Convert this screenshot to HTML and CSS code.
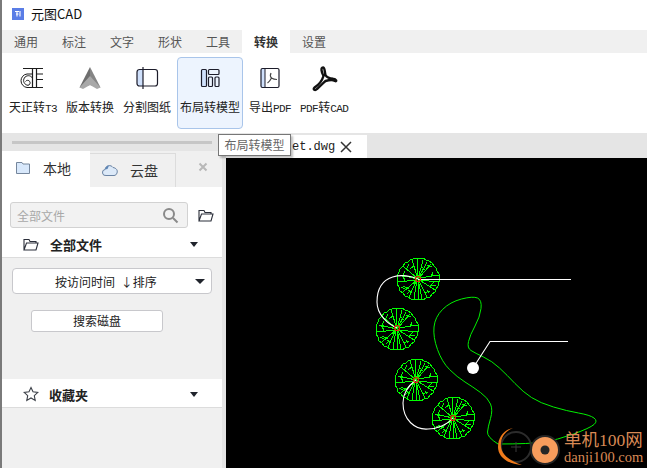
FILE: index.html
```html
<!DOCTYPE html>
<html lang="zh">
<head>
<meta charset="utf-8">
<title>元图CAD</title>
<link rel="stylesheet" href="styles.css">
</head>
<body>
<div class="app">
  <header class="titlebar">
    <svg class="logo" viewBox="0 0 12 12"><rect width="12" height="12" fill="#5a7de6"/><path d="M3 3.500H7M4 6H6.500M8 3V8.500M5 3.500V8.500" stroke="#fff" stroke-width="1.100" fill="none"/></svg>
    <span class="apptitle">元图CAD</span>
  </header>
  <nav class="menutabs">
    <span class="menutab">通用</span><span class="menutab">标注</span><span class="menutab">文字</span><span class="menutab">形状</span><span class="menutab">工具</span><span class="menutab active">转换</span><span class="menutab">设置</span>
  </nav>
  <section class="ribbon">
    <div class="rbtn">
      <svg class="ricon" viewBox="0 0 28 28"><path d="M4 4.500H24M13.500 4.500V23.500M17.500 4.500V23.500M17.500 10H24M17.500 15.500H24M8 23.500H24M13.500 10H8" fill="none" stroke="#1c1c1c" stroke-width="1.200"/><path d="M8 10A6.800 6.800 0 0 0 8 23.500M13.500 14A4.800 4.800 0 1 0 9 21.300A2.500 2.500 0 1 0 6.500 17.500" fill="none" stroke="#1c1c1c" stroke-width="1"/></svg>
      <span class="rlabel">天正转<span class="latin">T3</span></span>
    </div>
    <div class="rbtn">
      <svg class="ricon" viewBox="0 0 28 28"><path d="M14 3L3.500 23.500L14 21Z" fill="#6e6e6e"/><path d="M14 3L24.500 23.500L14 21Z" fill="#858585"/><path d="M14 12L3.500 23.500L7 25L14 21L21 25L24.500 23.500Z" fill="#a8a8a8"/></svg>
      <span class="rlabel">版本转换</span>
    </div>
    <div class="rbtn">
      <svg class="ricon" viewBox="0 0 28 28"><path d="M10 5.500H6.500A2.500 2.500 0 0 0 4 8V19.500A2.500 2.500 0 0 0 6.500 22H10Z" fill="#cfe0fb"/><rect x="4" y="5.500" width="20.500" height="16.500" rx="2.500" fill="none" stroke="#1c1c2a" stroke-width="1.200"/><path d="M10 3V25" stroke="#1c1c2a" stroke-width="1.200"/></svg>
      <span class="rlabel">分割图纸</span>
    </div>
    <div class="rbtn selected">
      <svg class="ricon" viewBox="0 0 28 28"><rect x="5.500" y="5.500" width="5" height="17" rx="1" fill="#cfe0fb" stroke="#1c1c2a" stroke-width="1.200"/><rect x="12.500" y="5.500" width="10.500" height="5" rx="1" fill="none" stroke="#1c1c2a" stroke-width="1.200"/><rect x="12.500" y="13" width="4" height="9.500" rx="1" fill="none" stroke="#1c1c2a" stroke-width="1.200"/><rect x="19" y="13" width="4" height="9.500" rx="1" fill="none" stroke="#1c1c2a" stroke-width="1.200"/></svg>
      <span class="rlabel">布局转模型</span>
    </div>
    <div class="rbtn">
      <svg class="ricon" viewBox="0 0 28 28"><path d="M5 4.500H9V23.500H5Z" fill="#cfe0fb"/><rect x="5" y="4.500" width="18" height="19" rx="1.500" fill="none" stroke="#1c1c2a" stroke-width="1.200"/><path d="M9 4.500V23.500" stroke="#1c1c2a" stroke-width="1"/><path d="M15 9C14 11 14.500 13 15.500 14C14.500 16 13 18 11.500 19M15.500 14C17 15 19 15.500 21 15.500" fill="none" stroke="#444" stroke-width="1.200"/></svg>
      <span class="rlabel">导出<span class="latin">PDF</span></span>
    </div>
    <div class="rbtn">
      <svg class="ricon" viewBox="0 0 28 28"><path d="M13 3.500C10.500 3.500 11.500 8.500 13.500 12C12 17 8.500 21 4.500 23.500C2.500 25.500 5 27 7 25C10 22.500 12.500 19.500 15.500 17C19 16 23 15.500 25 17C27 18 26.500 15 23 14.800C20 14.500 17 14 15.500 11C14.500 8 15 3.500 13 3.500Z" fill="none" stroke="#111" stroke-width="2.400" stroke-linejoin="round"/></svg>
      <span class="rlabel"><span class="latin">PDF</span>转<span class="latin">CAD</span></span>
    </div>
  </section>
  <main class="workspace">
    <aside class="sidebar">
      <div class="band"><div class="strip"></div></div>
      <div class="sidetabs">
        <div class="sidetab current">
          <svg class="sideicon" viewBox="0 0 16 14"><path d="M1.500 1.500H7L8 3H14.500V12.500H1.500Z" fill="#d8e8fb" stroke="#75869c"/></svg>
          <span>本地</span>
        </div>
        <div class="sidetab">
          <svg class="sideicon" viewBox="0 0 16 14"><path d="M4 12.500A3 3 0 0 1 3 6.500C4 2 9 1.500 11 4.500C14 5 16 7 15 10C14.500 11.500 13.500 12.500 12 12.500Z" fill="#dce9f8" stroke="#6b84a4"/><path d="M3 6.500C3.500 4 5 2.500 7 2.500L5.500 6Z" fill="#5f86b5"/></svg>
          <span>云盘</span>
        </div>
        <svg class="sideclose" viewBox="0 0 10 10"><path d="M1.500 1.500L8.500 8.500M8.500 1.500L1.500 8.500" stroke="#b8b8b8" stroke-width="2"/></svg>
      </div>
      <div class="filesection">
        <div class="searchrow">
          <div class="searchbox">
            <span class="placeholder">全部文件</span>
            <svg class="searchicon" viewBox="0 0 17 17"><circle cx="7" cy="7" r="5" fill="none" stroke="#8a8a8a" stroke-width="2"/><path d="M11 11L15.500 15.500" stroke="#8a8a8a" stroke-width="2"/></svg>
          </div>
          <svg class="foldericon" viewBox="0 0 16 13"><path d="M1 12V1.500H6L7 3.500H13V5M1 12H13L15 5H3.500L1 12Z" fill="none" stroke="#2b2f3a" stroke-width="1.100"/></svg>
        </div>
        <div class="grouprow">
          <svg class="foldericon" viewBox="0 0 16 13"><path d="M1 12V1.500H6L7 3.500H13V5M1 12H13L15 5H3.500L1 12Z" fill="none" stroke="#2b2f3a" stroke-width="1.100"/></svg>
          <span class="grouplabel">全部文件</span>
          <span class="caret"></span>
        </div>
      </div>
      <div class="panel">
        <div class="sortselect">
          <span>按访问时间 ↓排序</span>
          <span class="caret large"></span>
        </div>
        <div class="diskbutton">搜索磁盘</div>
      </div>
      <div class="grouprow favorites">
        <svg class="foldericon" viewBox="0 0 16 16"><path d="M8 1.500L10 5.800L14.800 6.400L11.300 9.600L12.200 14.400L8 12L3.800 14.400L4.700 9.600L1.200 6.400L6 5.800Z" fill="none" stroke="#3c4048" stroke-width="1.100"/></svg>
        <span class="grouplabel">收藏夹</span>
        <span class="caret"></span>
      </div>
      <div class="panelrest"></div>
    </aside>
    <section class="document">
      <div class="doctabs">
        <div class="doctab">
          <span class="docname">et.dwg</span>
          <svg class="docclose" viewBox="0 0 12 12"><path d="M1 1L11 11M11 1L1 11" stroke="#333" stroke-width="1.500"/></svg>
        </div>
      </div>
      <div class="canvas">
        <svg class="drawing" viewBox="226 158 421 310">
          <defs>
            <g id="tree" class="treeshape">
              <path d="M-5 -20L-2 -21L2 -20L5 -21L8 -19L11 -18L14 -16L16 -13L18 -11L19 -8L21 -5L21 3L20 7L18 10L17 13L14 15L12 18L8 19L5 21L1 20L-3 21L-7 20L-10 18L-13 17L-15 14L-18 12L-19 8L-21 5L-20 1L-21 -3L-19 -7L-18 -10L-15 -13L-13 -16L-10 -17L-7 -20Z"/>
              <path d="M0 0L-6 -19M-1 -1L-1 -20M0 0L5 -19M0 0L9 -17M0 0L13 -15M1 -1L21 -4M1 1L21 3M0 0L-18 -4M0 0L-15 -13M0 0L17 11M0 0L9 18M0 0L4 20M0 0L0 21M-1 0L-4 20M-1 0L-9 18M-1 1L-15 13M-1 1L-20 3"/>
              <path d="M-4 -13L-8 -10M4 -12L8 -8M-13 -8L-16 -2M13 -2L15 -7M-9 10L-15 7M-13 2L-15 -3M11 8L16 3M-6 13L-10 11M6 14L12 12M-9 -15L-11 -11M9 -14L14 -12M18 7L13 6M-17 8L-13 10M11 14L9 11M-11 15L-8 12"/>
            </g>
          </defs>
          <use href="#tree" x="418" y="279"/>
          <use href="#tree" x="397" y="329"/>
          <use href="#tree" x="416" y="380"/>
          <use href="#tree" x="453" y="418"/>
          <path class="greenline" d="M498 444Q487 437 487.500 432Q488 427 490.500 418.500Q493 410 490.500 404Q488 398 480.500 392.500Q473 387 465 382Q457 377 449.500 369.500Q442 362 437.500 349.500Q433 337 434 327Q435 317 442.500 309.500Q450 302 461.500 299Q473 296 477.500 298Q482 300 481 308.500Q480 317 475 326Q470 335 468.500 341.500Q467 348 471 350.500Q475 353 483.500 357Q492 361 499.500 368Q507 375 515 383.500Q523 392 531.500 397.500Q540 403 553.500 407Q567 411 578.500 413Q590 415 594 418Q598 421 594 424.500Q590 428 573.500 434Q557 440 543.500 442Q530 444 498 444Z"/>
          <path class="whiteline" d="M418 279.500H571M418 279C405 273 377 272 377 302C377 315 388 324 397 328M416 380C405 388 403 397 403 403C403 420 415 430 428 429C438 429 448 424 453 418M473 368L490 341.500H568"/>
          <circle class="whitedot" cx="473" cy="368" r="6"/>
          <circle class="redmark" cx="418" cy="279" r="2.500"/>
          <circle class="redmark" cx="397" cy="328" r="2.500"/>
          <circle class="redmark" cx="416" cy="380" r="2.500"/>
          <circle class="redmark" cx="453" cy="418" r="2.500"/>
          <circle class="markring" cx="516" cy="447" r="15"/>
          <path class="markarc" d="M513 428C503 430 498 438 498 447C498 456 506 464 522 465C510 461 502 455 501 447C500 438 505 431 513 428Z"/>
          <path class="markcross" d="M511 447H521M516 442V452"/>
          <circle class="markdisc" cx="545" cy="450" r="14"/>
          <circle class="markhole" cx="545" cy="450" r="4.500"/>
          <text class="marktitle" x="564" y="446">单机100网</text>
          <text class="markurl" x="564" y="462">danji100.com</text>
        </svg>
      </div>
    </section>
  </main>
  <div class="tooltip">布局转模型</div>
</div>
</body>
</html>
```
FILE: styles.css
```css
* { box-sizing: border-box; }
html, body { margin: 0; padding: 0; }
body {
  font-family: "Noto Sans CJK SC", "Liberation Sans", sans-serif;
  font-size: 12px;
  color: #222;
  background: #fff;
  overflow: hidden;
}
.app {
  position: relative;
  width: 647px;
  height: 468px;
  display: flex;
  flex-direction: column;
  border-left: 2px solid #7a7a7a;
  overflow: hidden;
}
.titlebar {
  height: 30px;
  flex: none;
  display: flex;
  align-items: center;
  gap: 7px;
  padding: 0 0 3px 10px;
  background: #fff;
}
.logo { width: 12px; height: 12px; flex: none; }
.apptitle { font-size: 13px; color: #111; line-height: 1; }
.menutabs {
  height: 23px;
  flex: none;
  display: flex;
  background: #f0f0f0;
}
.menutab {
  width: 48px;
  text-align: center;
  line-height: 23px;
  color: #555;
}
.menutab.active { background: #fff; font-weight: 700; color: #333; }
.ribbon {
  height: 80px;
  flex: none;
  display: flex;
  gap: 3px;
  padding: 4px 0 4px 4px;
  background: #fff;
}
.rbtn {
  height: 72px;
  padding: 6px 2px 0;
  border: 1px solid transparent;
  border-radius: 4px;
  display: flex;
  flex-direction: column;
  align-items: center;
  gap: 5px;
  white-space: nowrap;
}
.rbtn.selected { background: #edf4fe; border-color: #a9c5ea; }
.ricon { width: 28px; height: 28px; flex: none; }
.rlabel { line-height: 20px; color: #222; }
.latin { font-family: "Liberation Mono", monospace; font-size: 11px; letter-spacing: -0.6px; }
.workspace { flex: 1; display: flex; min-height: 0; }
.sidebar {
  width: 220px;
  flex: none;
  display: flex;
  flex-direction: column;
  background: #f0f0f0;
}
.band { height: 18px; flex: none; padding: 8px 10px 0; background: #e5e5e5; }
.strip { height: 3px; background: #c6c6c6; }
.sidetabs {
  height: 36px;
  flex: none;
  display: flex;
  align-items: stretch;
  background: #f0f0f0;
}
.sidetab {
  width: 86px;
  display: flex;
  align-items: center;
  gap: 12px;
  padding: 0 0 1px 12px;
  margin-top: 2px;
  font-size: 14px;
  border: 1px solid #dcdcdc;
  border-bottom: 0;
  border-left: 0;
  color: #333;
}
.sidetab.current {
  width: 88px;
  margin-top: 0;
  padding: 0 0 2px 13px;
  background: #fff;
  border: 0;
}
.sideicon { width: 16px; height: 14px; flex: none; }
.sideclose { width: 10px; height: 10px; align-self: center; margin-left: 22px; margin-top: -4px; }
.filesection { height: 71px; flex: none; padding-top: 15px; background: #fff; border-bottom: 1px solid #dcdcdc; }
.searchrow { display: flex; align-items: center; gap: 10px; padding-left: 8px; }
.searchbox {
  width: 178px;
  height: 26px;
  display: flex;
  align-items: center;
  justify-content: space-between;
  padding: 0 8px 0 6px;
  background: #f2f2f2;
  border: 1px solid #d2d2d2;
  border-radius: 3px;
}
.placeholder { color: #a8a8a8; }
.searchicon { width: 17px; height: 17px; flex: none; }
.foldericon { width: 16px; height: 13px; flex: none; }
.grouprow {
  height: 25px;
  margin-top: 5px;
  display: flex;
  align-items: center;
  gap: 11px;
  padding: 0 24px 2px 21px;
}
.grouplabel { font-size: 13px; font-weight: 700; color: #222; }
.caret {
  width: 0;
  height: 0;
  margin-left: auto;
  border-left: 4px solid transparent;
  border-right: 4px solid transparent;
  border-top: 5px solid #20242c;
}
.caret.large { border-left-width: 5px; border-right-width: 5px; }
.panel { height: 121px; flex: none; padding: 10px 10px 0; background: #f0f0f0; }
.sortselect {
  width: 200px;
  height: 26px;
  display: flex;
  align-items: center;
  padding: 0 6px 0 42px;
  background: #fff;
  border: 1px solid #c8c8cc;
  border-radius: 4px;
  white-space: pre;
  word-spacing: 3px;
}
.diskbutton {
  width: 132px;
  height: 22px;
  margin: 16px 0 0 19px;
  line-height: 20px;
  text-align: center;
  background: #fff;
  border: 1px solid #c8c8cc;
  border-radius: 3px;
}
.favorites {
  height: 29px;
  margin-top: 0;
  flex: none;
  gap: 10px;
  padding: 2px 24px 0 21px;
  background: #fff;
  border-bottom: 1px solid #dcdcdc;
}
.favorites .foldericon { width: 16px; height: 16px; }
.panelrest { flex: 1; background: #f0f0f0; }
.document { flex: 1; display: flex; flex-direction: column; min-width: 0; background: #e5e5e5; padding-left: 4px; }
.doctabs { height: 25px; flex: none; padding-top: 2px; }
.doctab {
  width: 141px;
  height: 23px;
  display: flex;
  align-items: center;
  padding-left: 66px;
  background: #fff;
  font-family: "Liberation Mono", monospace;
  color: #222;
}
.docname { width: 48px; }
.docclose { width: 12px; height: 12px; flex: none; }
.canvas { flex: 1; background: #000; min-height: 0; }
.drawing { display: block; width: 421px; height: 310px; }
.treeshape path { fill: none; stroke: #00ff00; stroke-width: 1; shape-rendering: crispEdges; }
.greenline { fill: none; stroke: #00f000; stroke-width: 1; }
.whiteline { fill: none; stroke: #fff; stroke-width: 1.100; }
.whitedot { fill: #fff; }
.redmark { fill: none; stroke: #f01010; stroke-width: 1.200; }
.markring { fill: none; stroke: #2c2c2c; stroke-width: 2; }
.markarc { fill: #ef7a1a; }
.markcross { fill: none; stroke: #3a3a3a; stroke-width: 1; }
.markdisc { fill: #f79c5c; stroke: #252525; stroke-width: 2; }
.markhole { fill: #262626; }
.marktitle { font-family: "Liberation Serif", "Noto Sans CJK SC", serif; font-size: 17.500px; fill: #d98a55; }
.markurl { font-family: "Liberation Serif", serif; font-size: 14.500px; fill: #d98a55; }
.tooltip {
  position: absolute;
  left: 216px;
  top: 134px;
  width: 73px;
  height: 22px;
  line-height: 20px;
  text-align: center;
  background: #fff;
  border: 1px solid #777;
  color: #666;
  box-shadow: 2px 2px 2px rgba(0, 0, 0, 0.25);
}
```
